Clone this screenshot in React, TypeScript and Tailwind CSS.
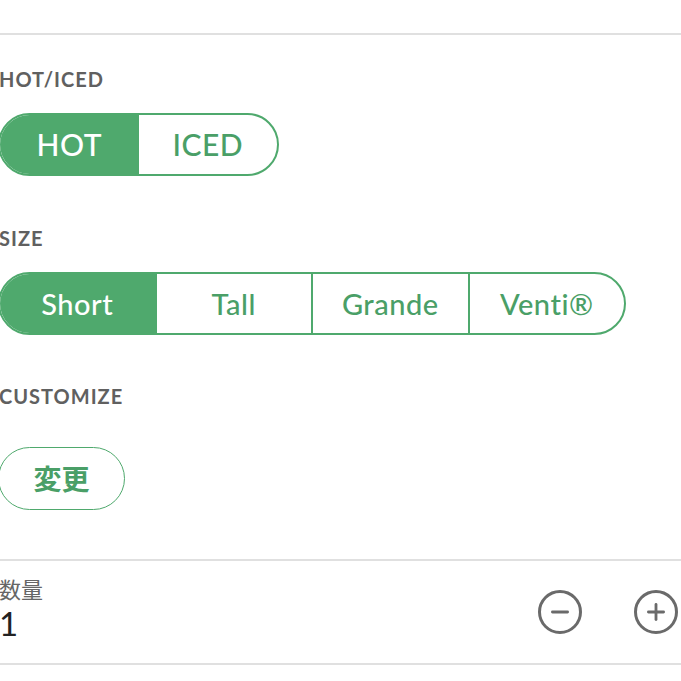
import { Minus, Plus } from 'lucide-react';

const sizes = ['Short', 'Tall', 'Grande', 'Venti®'];

function Label({ children }: { children: React.ReactNode }) {
  return (
    <div className="h-[19px] text-[20px] leading-[19px] font-bold tracking-[1px] text-[#606060]">
      {children}
    </div>
  );
}

export default function App() {
  return (
    <div
      className="w-[681px] h-[681px] overflow-hidden bg-white"
      style={{ fontFamily: 'Lato, "Noto Sans CJK JP", sans-serif' }}
    >
      <div className="h-[33px]" />
      <div className="h-[2px] bg-[#e0e0e0]" />

      <div className="-ml-[1px] pt-[35px]">
        {/* Hot / iced */}
        <Label>HOT/ICED</Label>
        <div className="mt-[24px] -ml-px flex h-[63px] w-[281px] overflow-hidden rounded-full border-2 border-[#4fa96d]">
          <div className="flex flex-1 items-center justify-center bg-[#4fa96d] text-[30px] font-medium tracking-[0.5px] text-white">
            HOT
          </div>
          <div className="flex flex-1 items-center justify-center text-[30px] font-medium tracking-[0.5px] text-[#4a9f67]">
            ICED
          </div>
        </div>

        {/* Size */}
        <div className="mt-[53px]">
          <Label>SIZE</Label>
        </div>
        <div className="mt-[24px] -ml-px flex h-[63px] w-[628px] overflow-hidden rounded-full border-2 border-[#4fa96d]">
          {sizes.map((s, i) => (
            <div
              key={s}
              className={`flex flex-1 items-center justify-center text-[29px] font-medium tracking-[0.5px] ${
                i === 0 ? 'bg-[#4fa96d] text-white' : 'border-l-2 border-[#4fa96d] text-[#4a9f67]'
              }`}
            >
              {s}
            </div>
          ))}
        </div>

        {/* Customize */}
        <div className="mt-[52px]">
          <Label>CUSTOMIZE</Label>
        </div>
        <button className="mt-[41px] -ml-px flex h-[63px] w-[127px] items-center justify-center rounded-full border border-[#4fa96d] text-[28px] font-bold text-[#4a9f67]">
          変更
        </button>
      </div>

      <div className="mt-[49px] h-[2px] bg-[#e0e0e0]" />

      {/* Quantity */}
      <div className="-ml-[1px] flex h-[102px] justify-between pr-[3px]">
        <div className="flex flex-col pt-[18px]">
          <span className="text-[22px] leading-[22px] text-[#666]">数量</span>
          <span className="mt-[6px] text-[33px] leading-[33px] text-[#222]">1</span>
        </div>
        <div className="flex items-center gap-[52px] self-center">
          <div className="flex h-[44px] w-[44px] items-center justify-center rounded-full border-[3px] border-[#6a6a6a]">
            <Minus className="h-[26px] w-[26px] text-[#6a6a6a]" strokeWidth={2.6} />
          </div>
          <div className="flex h-[44px] w-[44px] items-center justify-center rounded-full border-[3px] border-[#6a6a6a]">
            <Plus className="h-[26px] w-[26px] text-[#6a6a6a]" strokeWidth={2.6} />
          </div>
        </div>
      </div>
      <div className="h-[2px] bg-[#e0e0e0]" />
    </div>
  );
}
